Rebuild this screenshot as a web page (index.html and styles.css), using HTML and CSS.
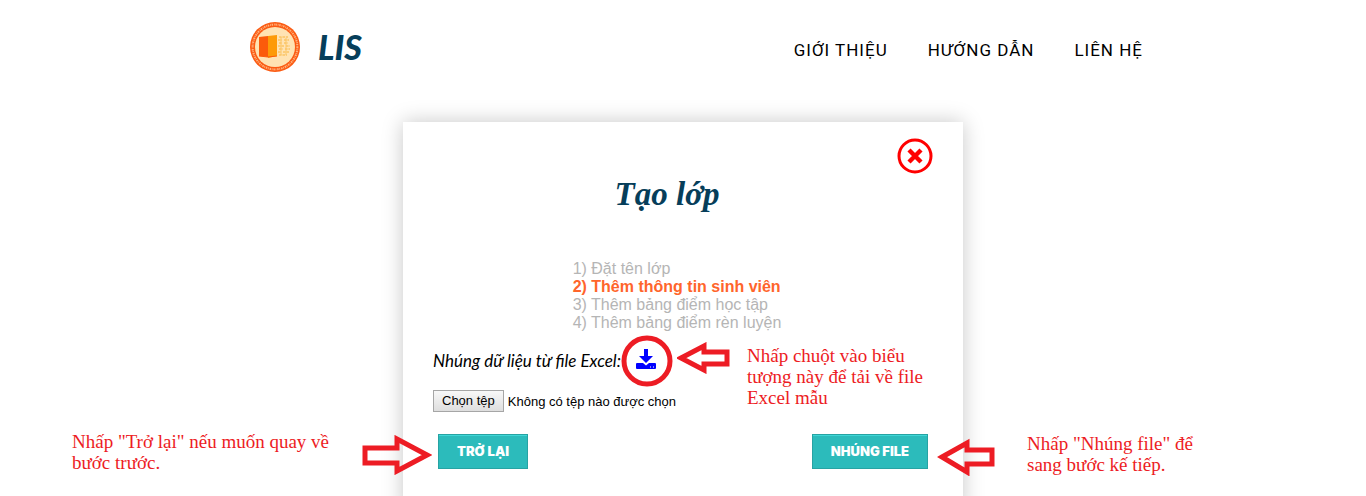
FILE: index.html
```html
<!DOCTYPE html>
<html lang="vi">
<head>
<meta charset="utf-8">
<meta name="viewport" content="width=device-width, initial-scale=1">
<title>LIS - Tạo lớp</title>
<link rel="stylesheet" href="styles.css">
</head>
<body>
<header class="site-header">
  <a class="brand" href="#">
    <svg class="brand-seal" viewBox="0 0 50 50" aria-hidden="true">
      <circle cx="25" cy="25" r="25" fill="#fb5b13"/>
      <circle cx="25" cy="25" r="22.4" fill="none" stroke="#ffb27d" stroke-width="2" stroke-dasharray="1.5 .9 .8 .7"/>
      <circle cx="25" cy="25" r="20" fill="#ffe3b3"/>
      <path d="M9 15l9-1v21l-9-1z" fill="#fb5b0b"/>
      <path d="M18 14l9-1v21l-9 2z" fill="#fd9a08"/>
      <path d="M9 34l9 1 9-1" fill="none" stroke="#fb5b0b"/>
      <g fill="none" stroke="#fbc565" stroke-width="1.4">
        <path d="M29 15h9M28 18h4m2 0h5M29 21h3m2 0h4M28 24h6m2 0h4M29 27h4m2 0h5M28 30h3m2 0h6M29 33h8" stroke-dasharray="2.6 .8"/>
        <path d="M31 15v18M36 16v17" stroke-width="1"/>
      </g>
    </svg>
    <span class="brand-name">LIS</span>
  </a>
  <nav class="site-nav">
    <a href="#">GIỚI THIỆU</a>
    <a href="#">HƯỚNG DẪN</a>
    <a href="#">LIÊN HỆ</a>
  </nav>
</header>
<main class="dialog">
  <button class="close" type="button" aria-label="Đóng">
    <svg viewBox="0 0 36 36" aria-hidden="true"><circle cx="18" cy="18" r="16" fill="none" stroke="red" stroke-width="3"/><path d="M12 12l12 12M24 12L12 24" stroke="red" stroke-width="4.4"/></svg>
  </button>
  <h1 class="title">Tạo lớp</h1>
  <ul class="steps">
    <li>1) Đặt tên lớp</li>
    <li class="current">2) Thêm thông tin sinh viên</li>
    <li>3) Thêm bảng điểm học tập</li>
    <li>4) Thêm bảng điểm rèn luyện</li>
  </ul>
  <form class="form">
    <div class="source">
      <label for="excel">Nhúng dữ liệu từ file Excel:</label>
      <a class="download" href="#" aria-label="Tải về file Excel mẫu">
        <svg viewBox="0 0 20 20" aria-hidden="true"><path fill="#00f" d="M8 0h4v7h5l-7 7-7-7h5zM1 14h6l3 2.5 3-2.5h6q1 0 1 1v4q0 1-1 1H1q-1 0-1-1v-4q0-1 1-1z"/><path d="M14 18h1m2 0h1" stroke="#fff"/></svg>
      </a>
    </div>
    <div class="picker">
      <input class="picker-input" id="excel" type="file">
      <label class="picker-button" for="excel">Chọn tệp</label>
      <span>Không có tệp nào được chọn</span>
    </div>
    <div class="actions">
      <button class="action" type="button">TRỞ LẠI</button>
      <button class="action" type="button">NHÚNG FILE</button>
    </div>
  </form>
  <svg class="mark mark-ring" viewBox="0 0 52 52" aria-hidden="true"><circle cx="26" cy="26" r="23"/></svg>
  <svg class="mark mark-download" viewBox="0 0 54 32" aria-hidden="true"><path d="M4 16L27 4v6h23v12H27v6z"/></svg>
  <svg class="mark mark-back" viewBox="0 0 70 40" aria-hidden="true"><path d="M3 13h32V4l30 16-30 16v-8H3z"/></svg>
  <svg class="mark mark-embed" viewBox="0 0 60 38" aria-hidden="true"><path d="M6 19L31 5v7h25v14H31v8z"/></svg>
  <p class="note note-download">Nhấp chuột vào biểu tượng này để tải về file Excel mẫu</p>
  <p class="note note-back">Nhấp "Trở lại" nếu muốn quay về bước trước.</p>
  <p class="note note-embed">Nhấp "Nhúng file" để sang bước kế tiếp.</p>
</main>
</body>
</html>
```
FILE: styles.css
```css
* { box-sizing: border-box; }
body {
  margin: 0;
  min-height: 100vh;
  display: flex;
  flex-direction: column;
  align-items: center;
  overflow: hidden;
  background: #fff;
  color: #000;
  font-family: "Liberation Sans", sans-serif;
}
.site-header {
  width: 100%;
  max-width: 920px;
  padding: 22px 0 50px 27px;
  display: flex;
  align-items: center;
  justify-content: space-between;
}
.brand {
  display: flex;
  align-items: center;
  gap: 18px;
  color: #063e5a;
  text-decoration: none;
}
.brand-seal { width: 50px; height: 50px; }
.brand-name { font: italic 900 34px/50px Lato, sans-serif; }
.site-nav {
  display: flex;
  gap: 40px;
  padding-top: 6px;
}
.site-nav a {
  color: #000;
  text-decoration: none;
  font: 400 17px/24px Roboto, sans-serif;
  letter-spacing: 1px;
}
.dialog {
  position: relative;
  flex: 1;
  width: 560px;
  max-width: 100%;
  margin-bottom: -20px;
  padding: 50px 30px 40px;
  background: #fff;
  box-shadow: 0 0 20px rgba(0, 0, 0, .22);
}
.close {
  position: absolute;
  top: 16px;
  right: 30px;
  width: 36px;
  height: 36px;
  padding: 0;
  border: 0;
  background: none;
}
.close svg { display: block; }
.title {
  margin: 0 32px 44px 0;
  color: #063e5a;
  text-align: center;
  font: italic bold 33px/44px "Liberation Serif", serif;
}
.steps {
  width: fit-content;
  margin: 0 auto;
  padding: 0 12px 0 0;
  list-style: none;
  color: #b5b5b5;
  font-size: 16px;
  line-height: 18px;
}
.steps .current { color: #ff652b; font-weight: bold; }
.source {
  display: flex;
  align-items: center;
  gap: 15px;
  height: 58px;
  font: italic 400 17px/24px Lato, sans-serif;
}
.download { width: 20px; height: 24px; }
.download svg { display: block; }
.picker {
  position: relative;
  display: flex;
  align-items: center;
  gap: 4px;
  font-size: 13px;
}
.picker-input { position: absolute; width: 70px; height: 21px; opacity: 0; }
.picker-button {
  padding: 2px 8px;
  border: 1px solid #a6a6a6;
  background: linear-gradient(#f8f8f8, #dedede);
  line-height: 16px;
}
.actions {
  display: flex;
  justify-content: space-between;
  margin-top: 22px;
  padding: 0 5px;
}
.action {
  height: 35px;
  padding: 0 18px 2px;
  border: 1px solid #27a3a3;
  background: #2cbbbb;
  box-shadow: inset 0 1px #3fd6d6;
  color: #fff;
  font: 900 13px/20px Inter, sans-serif;
}
.mark {
  position: absolute;
  fill: none;
  stroke: #ed1c24;
  stroke-width: 5px;
  pointer-events: none;
}
.mark-ring { top: 213px; left: 218px; width: 52px; height: 52px; }
.mark-download { top: 220px; left: 274px; width: 54px; height: 32px; }
.mark-back { top: 313px; left: -41px; width: 70px; height: 40px; }
.mark-embed { top: 316px; left: 533px; width: 60px; height: 38px; }
.note {
  position: absolute;
  margin: 0;
  color: #ed1c24;
  font: 19px/21px "Liberation Serif", serif;
}
.note-download { top: 223px; left: 344px; width: 180px; }
.note-back { top: 309px; left: -331px; width: 260px; }
.note-embed { top: 311px; left: 624px; width: 180px; }
```
